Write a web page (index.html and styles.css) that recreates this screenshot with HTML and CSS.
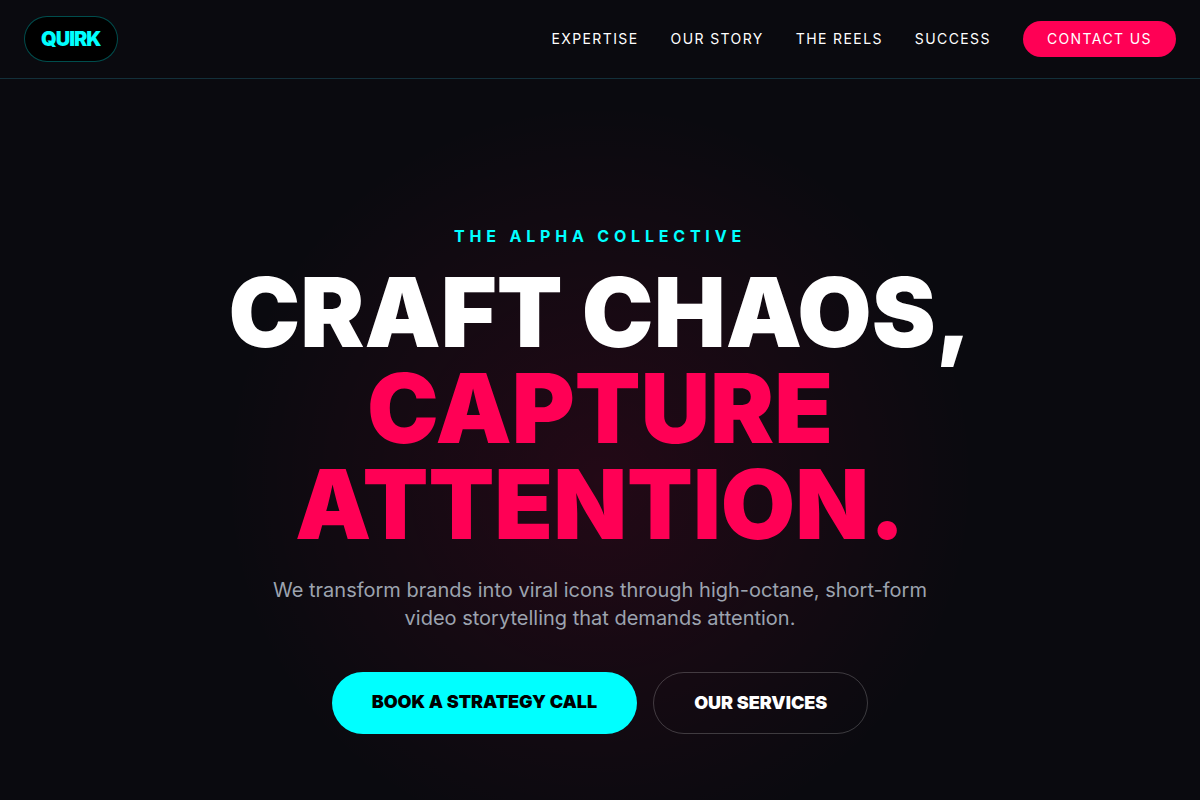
FILE: index.html
```html
<!DOCTYPE html>
<html lang="en">
<head>
    <meta charset="UTF-8">
    <meta name="viewport" content="width=device-width, initial-scale=1.0">
    <title>Quirk</title>
    <link rel="stylesheet" href="styles.css">
</head>
<body>
    <nav class="navbar">
        <a href="#" class="logo">QUIRK</a>
        <div class="nav-links">
            <a href="#expertise">Expertise</a>
            <a href="#story">Our Story</a>
            <a href="#reels">The Reels</a>
            <a href="#success">Success</a>
            <a href="#contact" class="nav-cta">Contact Us</a>
        </div>
    </nav>

    <section class="hero">
        <div class="hero-content">
            <h2 class="eyebrow">The Alpha Collective</h2>
            <h1>Craft Chaos, <br><span class="accent">Capture Attention.</span></h1>
            <p>We transform brands into viral icons through high-octane, short-form video storytelling that demands attention.</p>
            <div class="hero-buttons">
                <a href="#contact" class="btn btn-primary">Book a Strategy Call</a>
                <a href="#expertise" class="btn btn-outline">Our Services</a>
            </div>
        </div>
    </section>
</body>
</html>
```
FILE: styles.css
```css
* {
    box-sizing: border-box;
    margin: 0;
    padding: 0;
}

body {
    font-family: Inter, sans-serif;
    font-size: 16px;
    line-height: 24px;
    background-color: #0a0a0f;
    color: #fff;
    overflow-x: hidden;
}

a {
    color: inherit;
    text-decoration: none;
}

/* Navigation */
.navbar {
    display: flex;
    justify-content: space-between;
    align-items: center;
    padding: 16px 24px;
    border-bottom: 1px solid #13303a;
}

.logo {
    padding: 8px 16px;
    background-color: #000;
    border: 1px solid rgba(0, 255, 255, 0.3);
    border-radius: 9999px;
    color: #0ff;
    font-size: 20px;
    font-weight: 900;
    line-height: 28px;
    letter-spacing: -0.05em;
}

.nav-links {
    display: flex;
    align-items: center;
    gap: 32px;
    font-size: 14px;
    line-height: 20px;
    letter-spacing: 0.1em;
    text-transform: uppercase;
}

.nav-cta {
    padding: 8px 24px;
    background-color: #ff0055;
    border-radius: 9999px;
}

/* Hero */
.hero {
    display: flex;
    justify-content: center;
    align-items: center;
    min-height: 100vh;
    padding: 0 24px;
    background: radial-gradient(circle at center, rgba(255, 0, 85, 0.1) 0, transparent 376px);
}

.hero-content {
    max-width: 896px;
    text-align: center;
}

.eyebrow {
    margin-bottom: 16px;
    color: #0ff;
    font-size: 16px;
    font-weight: 700;
    letter-spacing: 0.3em;
    text-transform: uppercase;
}

h1 {
    margin-bottom: 24px;
    font-size: 96px;
    font-weight: 900;
    line-height: 1;
    text-transform: uppercase;
}

.accent {
    color: #ff0055;
}

.hero p {
    max-width: 672px;
    margin: 0 auto 40px;
    color: #9ca3af;
    font-size: 20px;
    line-height: 28px;
}

.hero-buttons {
    display: flex;
    justify-content: center;
    gap: 16px;
}

.btn {
    padding: 16px 40px;
    border-radius: 9999px;
    font-size: 18px;
    font-weight: 900;
    line-height: 28px;
    text-transform: uppercase;
}

.btn-primary {
    background-color: #0ff;
    color: #000;
}

.btn-outline {
    border: 1px solid rgba(255, 255, 255, 0.2);
}
```
